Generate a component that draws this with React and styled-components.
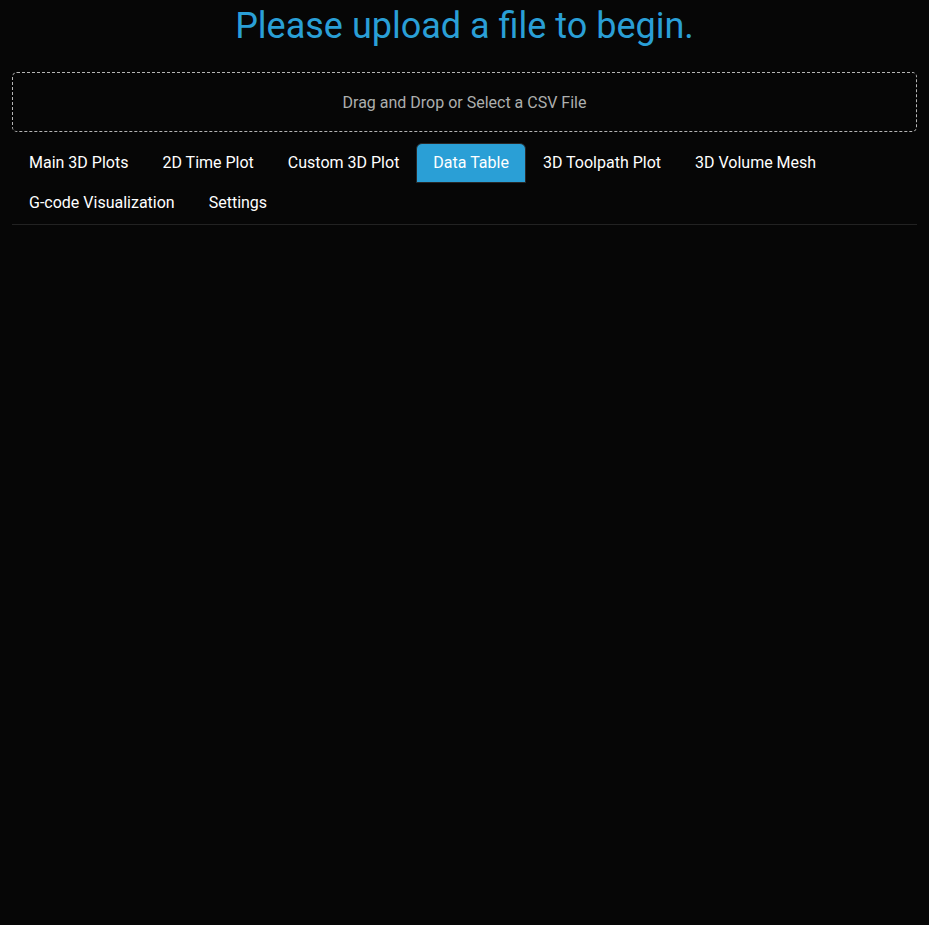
import React, { useState } from 'react';
import styled, { createGlobalStyle } from 'styled-components';

const GlobalStyle = createGlobalStyle`
  html, body {
    margin: 0;
    padding: 0;
    background-color: #060606;
    font-family: Roboto, "Liberation Sans", sans-serif;
    color: #adafae;
  }
`;

const Page = styled.div`
  padding: 0 12px;
  min-height: 925px;
  box-sizing: border-box;
`;

const Title = styled.h1`
  margin: 0;
  padding-top: 5px;
  font-size: 36px;
  font-weight: 400;
  line-height: 43px;
  color: #2a9fd6;
  text-align: center;
`;

const UploadBox = styled.div`
  margin-top: 24px;
  height: 60px;
  box-sizing: border-box;
  border: 1px dashed #b5b5b5;
  border-radius: 5px;
  display: flex;
  align-items: center;
  justify-content: center;
  padding-top: 1px;
  font-size: 16px;
  color: #adafae;
  cursor: pointer;
`;

const TabBar = styled.div`
  margin-top: 11px;
  padding-bottom: 1px;
  display: flex;
  flex-wrap: wrap;
  border-bottom: 1px solid #222;
`;

const Tab = styled.button`
  font-family: inherit;
  font-size: 16px;
  line-height: 22px;
  padding: 8px 16px;
  border: 1px solid ${p => (p.$active ? '#282828' : 'transparent')};
  border-radius: 6px 6px 0 0;
  background: ${p => (p.$active ? '#2a9fd6' : 'transparent')};
  color: #fff;
  cursor: pointer;
`;

const tabs = [
  'Main 3D Plots',
  '2D Time Plot',
  'Custom 3D Plot',
  'Data Table',
  '3D Toolpath Plot',
  '3D Volume Mesh',
  'G-code Visualization',
  'Settings',
];

const App = () => {
  const [active, setActive] = useState('Data Table');
  return (
    <>
      <GlobalStyle />
      <Page>
        <Title>Please upload a file to begin.</Title>
        <UploadBox>Drag and Drop or Select a CSV File</UploadBox>
        <TabBar>
          {tabs.map(t => (
            <Tab key={t} $active={active === t} onClick={() => setActive(t)}>
              {t}
            </Tab>
          ))}
        </TabBar>
      </Page>
    </>
  );
};

export default App;
